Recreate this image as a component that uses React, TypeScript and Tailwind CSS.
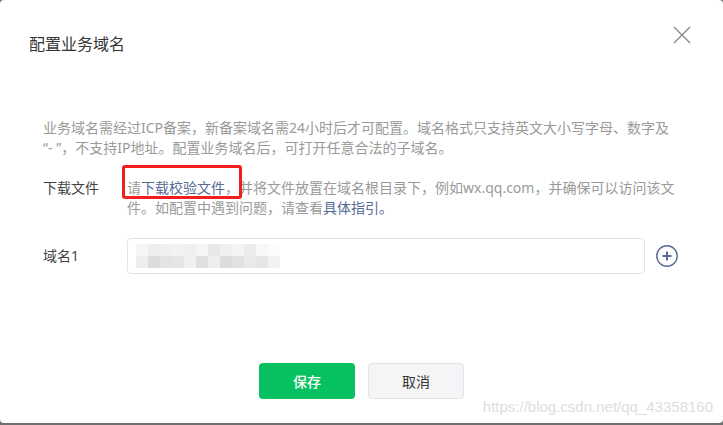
import React from 'react';

const mosaicTop = [
    'bg-[#f6f6f6]',
    'bg-[#eeeeee]',
    'bg-[#f0f0f0]',
    'bg-[#f2f2f2]',
    'bg-[#efefef]',
    'bg-[#f5f5f5]',
    'bg-[#e8e8e8]',
    'bg-[#f0f0f0]',
    'bg-[#f4f4f4]',
    'bg-[#ececec]',
    'bg-[#f7f7f7]',
    'bg-[#fbfbfb]',
];
const mosaicBottom = [
    'bg-[#eeeeee]',
    'bg-[#dcdcdc]',
    'bg-[#e3e3e3]',
    'bg-[#e6e6e6]',
    'bg-[#f0f0f0]',
    'bg-[#dfdfdf]',
    'bg-[#eeeeee]',
    'bg-[#dcdcdc]',
    'bg-[#e1e1e1]',
    'bg-[#e9e9e9]',
    'bg-[#e6e6e6]',
    'bg-[#f2f2f2]',
];

export default function App(): JSX.Element {
    return (
        <div className="w-[723px] h-[425px] bg-[#707070] overflow-hidden font-['Noto_Sans','Noto_Sans_CJK_SC',sans-serif]">
            <div className="relative h-[423px] bg-white rounded-[4px]">
                {/* header */}
                <div className="pt-[32px] pl-[29px] text-[16px] leading-[24px] text-[#353535]">配置业务域名</div>
                <button className="absolute top-[26px] right-[32px] w-[18px] h-[18px]" type="button">
                    <svg viewBox="0 0 18 18" className="w-[18px] h-[18px]" fill="none" stroke="#8a8a8a" strokeWidth="1.4">
                        <path d="M1 1L17 17M17 1L1 17" />
                    </svg>
                </button>

                {/* body */}
                <div className="mt-[62px] pl-[43px] pr-[45px] text-[14px] leading-[20px]">
                    <p className="mr-[-10px] text-[#9a9a9a]">
                        业务域名需经过ICP备案，新备案域名需24小时后才可配置。域名格式只支持英文大小写字母、数字及
                        <br />
                        “- ”，不支持IP地址。配置业务域名后，可打开任意合法的子域名。
                    </p>
                    <div className="mt-[20px] flex">
                        <div className="w-[84px] shrink-0 text-[#444444]">下载文件</div>
                        <p className="flex-1 text-[#9a9a9a]">
                            请<span className="text-[#576b95]">下载校验文件</span>
                            ，并将文件放置在域名根目录下，例如wx.qq.com，并确保可以访问该文件。如配置中遇到问题，请查看
                            <span className="text-[#576b95]">具体指引。</span>
                        </p>
                    </div>
                    <div className="mt-[20px] flex items-center">
                        <div className="w-[84px] shrink-0 text-[#444444]">域名1</div>
                        <div className="w-[519px] h-[36px] border border-[#e4e4e4] rounded-[4px] flex items-center pl-[8px]">
                            <div className="flex flex-col blur-[0.6px]">
                                <div className="flex">
                                    {mosaicTop.map((c, i) => (
                                        <div key={i} className={`w-[12px] h-[12px] ${c}`} />
                                    ))}
                                </div>
                                <div className="flex">
                                    {mosaicBottom.map((c, i) => (
                                        <div key={i} className={`w-[12px] h-[12px] ${c}`} />
                                    ))}
                                </div>
                            </div>
                        </div>
                        <button className="ml-[11px] w-[22px] h-[22px]" type="button">
                            <svg viewBox="0 0 22 22" className="w-[22px] h-[22px]" fill="none" stroke="#576b95">
                                <circle cx="11" cy="11" r="10.2" strokeWidth="1.4" />
                                <path d="M11 6.5V15.5M6.5 11H15.5" strokeWidth="2" />
                            </svg>
                        </button>
                    </div>
                </div>

                {/* footer */}
                <div className="mt-[89px] flex justify-center gap-[13px]">
                    <button
                        className="w-[96px] h-[36px] rounded-[4px] bg-[#07c160] text-white text-[14px] font-medium"
                        type="button">
                        保存
                    </button>
                    <button
                        className="w-[96px] h-[36px] rounded-[4px] bg-[#f4f5f7] border border-[#e2e4e8] text-[#353535] text-[14px]"
                        type="button">
                        取消
                    </button>
                </div>

                {/* annotation + watermark */}
                <div className="absolute left-[122px] top-[165px] w-[120px] h-[34px] border-[3px] border-[#f21d1d] rounded-[3px]" />
                <div className="absolute right-[10px] top-[398px] text-[15px] leading-[18px] text-[#dedede] font-['Liberation_Sans',sans-serif]">
                    https://blog.csdn.net/qq_43358160
                </div>
            </div>
        </div>
    );
}
